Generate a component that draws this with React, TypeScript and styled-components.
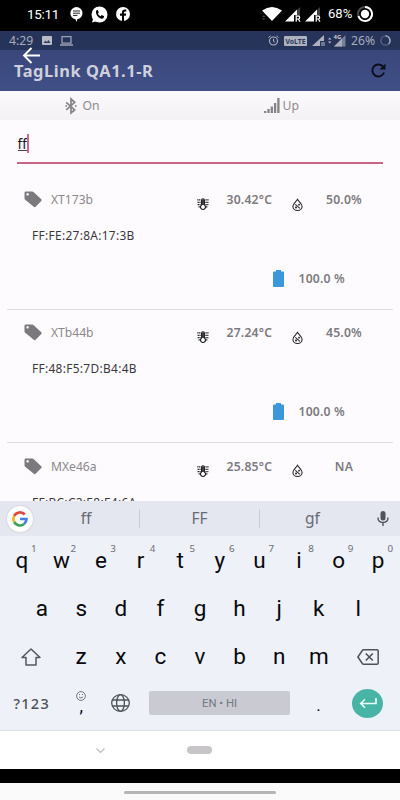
import React from 'react';
import styled, { createGlobalStyle } from 'styled-components';

const GlobalStyle = createGlobalStyle`
  * { box-sizing: border-box; }
  body { margin: 0; background: #000; overflow: hidden; }
`;

const Phone = styled.main`
  width: 400px;
  height: 800px;
  display: flex;
  flex-direction: column;
  overflow: hidden;
  background: #fefbff;
  font-family: 'Noto Sans', sans-serif;
  white-space: nowrap;
`;

const SystemBar = styled.div`
  flex: 0 0 31px;
  display: flex;
  align-items: center;
  background: #000;
  color: #fff;
  padding: 0 0 3px 27px;
  font: 13.5px/28px Roboto, sans-serif;
`;

const InnerBar = styled.div`
  flex: 0 0 19px;
  display: flex;
  align-items: center;
  background: linear-gradient(#27335a, #26345a);
  color: #a7acba;
  padding: 0 0 0 9px;
  font-size: 12.2px;
  line-height: 19px;
`;

const Label = styled.span<{ $w: number; $size?: number; $ml?: number; $tight?: boolean }>`
  flex: 0 0 ${p => p.$w}px;
  margin-left: ${p => p.$ml ?? 0}px;
  letter-spacing: ${p => (p.$tight ? '-0.3px' : 'normal')};
  ${p => p.$size ? `font-size: ${p.$size}px;` : ''}
`;

const Icon = styled.svg<{ $ml?: number; $mt?: number }>`
  display: block;
  flex: none;
  overflow: visible;
  margin-left: ${p => p.$ml ?? 0}px;
  margin-top: ${p => p.$mt ?? 0}px;
`;

const Header = styled.header`
  position: relative;
  flex: 0 0 41px;
  display: flex;
  align-items: center;
  justify-content: space-between;
  padding: 0 14px 0 14px;
  background: linear-gradient(#39477b, #404f86);
`;

const Title = styled.h1`
  margin: 0;
  color: #ced1dc;
  font-size: 16.4px;
  line-height: 24px;
  font-weight: 700;
  letter-spacing: 0.57px;
`;

const BackButton = styled.div`
  position: absolute;
  left: 22px;
  top: -3px;
`;

const Connection = styled.div`
  flex: 0 0 29px;
  display: flex;
  align-items: center;
  padding-left: 65px;
  background: linear-gradient(#faf9fb, #f5f2f5);
  color: #8d8b8e;
  font-size: 12.2px;
`;

const ConnectionItem = styled.div<{ $w: number; $gap: number }>`
  width: ${p => p.$w}px;
  display: flex;
  align-items: center;
  gap: ${p => p.$gap}px;
`;

const Search = styled.div`
  flex: 0 0 44px;
  margin: 0 17px;
  padding-top: 14px;
  border-bottom: 2px solid #cc6484;
  display: flex;
  color: #17151a;
  font-size: 13.6px;
  line-height: 20px;
`;

const Typed = styled.span`
  height: 17px;
  margin-left: 0.5px;
  border-bottom: 1px solid #444;
`;

const Caret = styled.i`
  width: 2px;
  height: 19px;
  background: #cf6588;
`;

const TagList = styled.section`
  flex: 0 0 337px;
  overflow: hidden;
  padding: 12.6px 7px 0;
`;

const TagRow = styled.article`
  height: 133.3px;
  border-bottom: 1px solid #e0dbe1;
  padding: 11px 0 0 17px;
`;

const TopLine = styled.div`
  display: grid;
  grid-template-columns: 27px 146px 29.5px 65px 26.5px 52px;
  align-items: center;
  height: 24px;
  color: #8a888c;
  font-size: 12.1px;
`;

const Reading = styled.span<{ $center?: boolean }>`
  color: #7c7a7e;
  font-size: 12.2px;
  font-weight: 600;
  letter-spacing: 0.2px;
  text-align: ${p => (p.$center ? 'center' : 'left')};
`;

const Address = styled.div`
  margin: 13.4px 0 0 8px;
  height: 20px;
  line-height: 20px;
  color: #39373b;
  font-size: 11.9px;
  letter-spacing: 0.32px;
`;

const BatteryLine = styled.div`
  margin: 22.3px 0 0 249px;
  height: 22px;
  display: flex;
  align-items: center;
  gap: 14.5px;
`;

const Keyboard = styled.section`
  flex: 0 0 230px;
  display: flex;
  flex-direction: column;
  background: #eef1f7;
  border-bottom: 1px solid #dedfe2;
  color: #08090c;
  font-family: Roboto, sans-serif;
`;

const Suggestions = styled.div`
  flex: 0 0 35px;
  display: grid;
  grid-template-columns: 33px 106px 121px 105px 35px;
  align-items: center;
  background: #e5e7f0;
  color: #686b72;
  font: 15.5px/35px 'Noto Sans', sans-serif;
  text-align: center;
`;

const Suggestion = styled.span<{ $framed?: boolean }>`
  height: 19px;
  line-height: 19px;
  border: solid #cdcfd7;
  border-width: ${p => (p.$framed ? '0 1px' : '0')};
`;

const GoogleBadge = styled.div`
  width: 26px;
  height: 26px;
  margin-left: 7px;
  border-radius: 50%;
  background: #fff;
  box-shadow: 0 0 2px #bbb;
  display: grid;
  place-items: center;
`;

const KeyRow = styled.div<{ $columns: string; $pad?: number; $lift?: number }>`
  flex: 0 0 48.2px;
  display: grid;
  grid-template-columns: ${p => p.$columns};
  padding: 0 ${p => p.$pad ?? 2}px ${p => p.$lift ?? 0}px;
`;

const Key = styled.div<{ $size?: number }>`
  position: relative;
  display: flex;
  flex-direction: column;
  align-items: center;
  justify-content: center;
  font-size: ${p => p.$size ?? 22.5}px;
  line-height: 22px;
`;

const Hint = styled.sup`
  position: absolute;
  left: 29px;
  top: 7px;
  color: #6b6e74;
  font: 9.8px/11px 'Noto Sans', sans-serif;
`;

const ModeKey = styled(Key)`
  color: #4c5057;
  font: 500 14.5px/20px 'Noto Sans', sans-serif;
  letter-spacing: 1.3px;
`;

const SpaceKey = styled.div`
  align-self: center;
  height: 24px;
  margin: 0 0 0 8.5px;
  border-radius: 2px;
  background: #cacad3;
  color: #6f7981;
  font-size: 11.3px;
  line-height: 25px;
  text-align: center;
`;

const CommaKey = styled(Key)`
  line-height: 10px;
  font-size: 18px;
  justify-content: flex-start;
  padding-top: 10px;
`;

const PeriodKey = styled(Key)`
  font-size: 17px;
  padding-top: 3px;
`;

const EnterKey = styled.div`
  align-self: center;
  margin-left: 5.5px;
  width: 31px;
  height: 29px;
  border-radius: 50%;
  background: #48b4a6;
  display: grid;
  place-items: center;
`;

const InnerNav = styled.nav`
  flex: 0 0 38px;
  display: flex;
  align-items: center;
  padding-left: 96px;
  background: #fff;
`;

const HomePill = styled.span`
  width: 25px;
  height: 8px;
  margin-left: 82px;
  border-radius: 4px;
  background: #c8c5c8;
`;

const BlackStrip = styled.div`
  flex: 0 0 14px;
  background: #000;
`;

const GestureBar = styled.div`
  flex: 0 0 17px;
  background: #fafafa;
  padding: 7.5px 0 0 124px;
`;

const GestureHandle = styled.span`
  display: block;
  width: 152px;
  height: 3px;
  border-radius: 2px;
  background: #b5b5b5;
`;

const Thermometer = () => (
  <Icon width="12" height="13" viewBox="0 0 12 13" $mt={10}>
    <path d="M4.6 7V2q0-1.300 1.400-1.300T7.400 2v5a2.500 2.500 0 1 1-2.800 0Z" fill="#fff" stroke="#171619" strokeWidth="1.100" />
    <path d="M6 1.500V7" stroke="#171619" strokeWidth="1.600" />
    <path d="M.2 1.800h3.400M.6 4.300h3M.6 6.600h3M1.500 8.800h1.500M8.400 1.800h3.400M8.400 4.300h3M8.400 6.600h3M9 8.800h1.500" stroke="#29282b" strokeWidth="1.300" strokeDasharray="1.400 .4" />
  </Icon>
);

const Droplet = () => (
  <Icon width="11" height="14" viewBox="0 0 12 14" $mt={10}>
    <path d="M6 .8C4.500 3.200 1 5.500 1 8.500a5 4.500 0 0 0 10 0C11 5.500 7.500 3.200 6 .8Z" fill="none" stroke="#252427" strokeWidth="1.200" />
    <path d="m3.600 6.200 5 4.500" stroke="#252427" strokeWidth="1.100" />
    <circle cx="7.700" cy="6.600" r="1" fill="#252427" />
    <circle cx="4.400" cy="9.700" r="1.100" fill="#252427" />
  </Icon>
);

const TagIcon = () => (
  <Icon width="18" height="17" viewBox="0 0 18 17">
    <path fillRule="evenodd" d="M1.800.5h6.400q.7 0 1.300.6l7.800 7.100q.8.8 0 1.700l-5.700 5.900q-.9.800-1.800 0L1.200 8.700Q.5 8 .5 7.200V1.900Q.5.500 1.800.500ZM3.600 2.100a1.250 1.250 0 1 0 .01 0Z" fill="#7b797d" />
  </Icon>
);

const SignalR = ({ ml }: { ml: number }) => (
  <Icon width="16" height="15" viewBox="0 0 16 15" $ml={ml}>
    <path d="M10 5 15 0v9H10Z" fill="#404040" />
    <path d="M0 14.500 12 2.500V8H9v6.500Z" fill="#fff" />
    <path d="M11.200 14.800V9.200h2.200q1.300 0 1.300 1.400T13.400 12h-2m1.800 0 1.800 2.800" stroke="#fff" strokeWidth="1.200" fill="none" />
  </Icon>
);

const tags = [
  { name: 'XT173b', address: 'FF:FE:27:8A:17:3B', temp: '30.42°C', humidity: '50.0%' },
  { name: 'XTb44b', address: 'FF:48:F5:7D:B4:4B', temp: '27.24°C', humidity: '45.0%' },
  { name: 'MXe46a', address: 'FF:BC:C2:E8:E4:6A', temp: '25.85°C', humidity: 'NA' },
];

export default function App() {
  return (
    <Phone>
      <GlobalStyle />
      <SystemBar>
        <Label $w={43} $tight>15:11</Label>
        <Icon width="13" height="15" viewBox="0 0 13 15">
          <path d="M6.500 0a6.300 6.200 0 0 1 .8 12.300L6.500 15l-1-2.700A6.300 6.200 0 0 1 6.500 0Z" fill="#fff" />
          <path d="M3 4h7M3 6.200h7M3 8.400h4.500" stroke="#222" strokeWidth="1" />
        </Icon>
        <Icon width="17" height="17" viewBox="0 0 17 17" $ml={8}>
          <circle cx="8.500" cy="8.500" r="8" fill="#fff" />
          <path d="m1 16.500 1.300-4.600L6 15Z" fill="#fff" />
          <path d="M5.400 4.300 6.800 4l1 2.500-1 1.200q1 1.600 2.700 2.500l1.200-1.100 2.400 1.200-.5 1.800c-3.300 2.500-9.200-3.400-7.200-7.800Z" fill="#000" />
        </Icon>
        <Icon width="14" height="14" viewBox="0 0 14 14" $ml={8}>
          <circle cx="7" cy="7" r="7" fill="#fff" />
          <path d="M6 14V8.800H4V6.600h2V5.200q0-2.800 2.800-2.800h1.500v2H9q-1 0-1 1v1.200h2.200l-.4 2.200H8V14Z" fill="#000" />
        </Icon>
        <Icon width="20" height="14" viewBox="0 0 20 14" $ml={132}>
          <path d="M0 3.500q10-7 20 0L10 14Z" fill="#fff" />
          <path d="m0 10 1.800-1.800L3.600 10Zm0 1.200L1.800 13l1.800-1.800Z" fill="#444" />
        </Icon>
        <SignalR ml={3} />
        <SignalR ml={4} />
        <Label $w={25} $size={13.100} $ml={7}>68%</Label>
        <Icon width="16" height="16" viewBox="0 0 16 16" $ml={4}>
          <circle cx="8" cy="8" r="7" fill="none" stroke="#4b4b4b" strokeWidth="2" />
          <path d="M8 1a7 7 0 1 1-6.600 9" fill="none" stroke="#fff" strokeWidth="2" />
          <circle cx="8" cy="8" r="4.200" fill="#fff" />
        </Icon>
      </SystemBar>

      <InnerBar>
        <Label $w={33}>4:29</Label>
        <Icon width="10" height="9" viewBox="0 0 10 9">
          <rect width="10" height="9" rx="1" fill="#b8bcc6" />
          <path d="m1.500 7 2-2.500L5 6l1.500-2L8.500 7Z" fill="#35405f" />
        </Icon>
        <Icon width="13" height="10" viewBox="0 0 13 10" $ml={8}>
          <path d="M2 .7h9v6.500H2ZM0 9h13" fill="none" stroke="#9aa1b3" strokeWidth="1.300" />
        </Icon>
        <Icon width="11" height="11" viewBox="0 0 11 11" $ml={194.500}>
          <circle cx="5.500" cy="6" r="4" fill="none" stroke="#b1b6c3" strokeWidth="1.100" />
          <path d="M5.500 3.800v2.500L7 7.200M.5 2.500 2.500.8M8.500.8l2 1.700" fill="none" stroke="#b1b6c3" />
        </Icon>
        <Icon width="23" height="10" viewBox="0 0 23 10" $ml={5.500}>
          <rect width="23" height="10" rx="1" fill="#aeb2bd" />
          <text x="1.500" y="7.800" fontSize="7.500" fontWeight="700" textLength="20" lengthAdjust="spacingAndGlyphs" fill="#2a365b">VoLTE</text>
        </Icon>
        <Icon width="13" height="11" viewBox="0 0 13 11" $ml={5}>
          <path d="M0 11 12 0v6H8v5Z" fill="#adb1bc" />
          <path d="M9 7h4v4H9Z" fill="#6d768c" />
        </Icon>
        <Icon width="18" height="13" viewBox="0 0 18 13" $ml={3}>
          <path d="M0 5.500 1.700 3.500 3.400 5.500Zm0 2L1.700 9.500 3.400 7.500Z" fill="#b5b9c4" />
          <path d="M6 12.500 17.500 1v11.500Z" fill="#74809a" />
          <path d="m6 12.500 8-8v8Z" fill="#a5abb9" />
          <text x="5.500" y="5" fontSize="6" fontWeight="700" fill="#c6cad3">4G</text>
        </Icon>
        <Label $w={24} $ml={5}>26%</Label>
        <Icon width="11" height="11" viewBox="0 0 11 11" $ml={5}>
          <circle cx="5.500" cy="5.500" r="4.600" fill="none" stroke="#56617f" strokeWidth="1.400" />
          <path d="M5.500.9a4.600 4.600 0 0 1 3 8" fill="none" stroke="#9da4b6" strokeWidth="1.400" />
        </Icon>
      </InnerBar>

      <Header>
        <BackButton>
          <Icon width="18" height="17" viewBox="0 0 18 17">
            <path d="M18 8.500H2M9.500 1 2 8.500 9.500 16" fill="none" stroke="#fff" strokeWidth="1.900" />
          </Icon>
        </BackButton>
        <Title>TagLink QA1.1-R</Title>
        <Icon width="15" height="15" viewBox="0 0 15 15">
          <path d="M12.200 4A6 6 0 1 0 13 9.500" fill="none" stroke="#0c0e18" strokeWidth="1.900" />
          <path d="M14.500.5v6H8.500Z" fill="#0c0e18" />
        </Icon>
      </Header>

      <Connection>
        <ConnectionItem $w={199} $gap={5.500}>
          <Icon width="12" height="16" viewBox="0 0 12 16">
            <path d="m1.200 4.300 8.500 7.600L6 15V1l3.700 3.300-8.500 7.600" fill="none" stroke="#858387" strokeWidth="1.700" />
            <path d="M10.800 7.100v1.800M1.200 7.100v1.800" stroke="#858387" strokeWidth="1.300" />
          </Icon>
          <span>On</span>
        </ConnectionItem>
        <ConnectionItem $w={40} $gap={2.500}>
          <Icon width="16" height="15" viewBox="0 0 16 15" $mt={-1}>
            <path d="M1.200 15v-2M4.500 15v-4M7.800 15V8.500M11.100 15V5M14.400 15V0" stroke="#858387" strokeWidth="2.300" />
          </Icon>
          <span>Up</span>
        </ConnectionItem>
      </Connection>

      <Search><Typed>ff</Typed><Caret /></Search>

      <TagList>
        {tags.map(tag => (
          <TagRow key={tag.name}>
            <TopLine>
              <TagIcon />
              <span>{tag.name}</span>
              <Thermometer />
              <Reading>{tag.temp}</Reading>
              <Droplet />
              <Reading $center>{tag.humidity}</Reading>
            </TopLine>
            <Address>{tag.address}</Address>
            <BatteryLine>
              <Icon width="11" height="17" viewBox="0 0 11 17">
                <path d="M3 1.500V0h5v1.500h2q1 0 1 1V16q0 1-1 1H1q-1 0-1-1V2.500q0-1 1-1Z" fill="#3b98da" />
              </Icon>
              <Reading>100.0 %</Reading>
            </BatteryLine>
          </TagRow>
        ))}
      </TagList>

      <Keyboard>
        <Suggestions>
          <GoogleBadge>
            <Icon width="16" height="16" viewBox="0 0 16 16">
              <g fill="none" strokeWidth="2.700">
                <path d="M12.800 3.500A6.500 6.500 0 0 0 2.200 5" stroke="#df493d" />
                <path d="M2.200 5a6.500 6.500 0 0 0 0 6" stroke="#edb72a" />
                <path d="M2.200 11a6.500 6.500 0 0 0 9.900 2" stroke="#38a45a" />
                <path d="M12.100 13a6.500 6.500 0 0 0 2.400-5H8" stroke="#4581dd" />
              </g>
            </Icon>
          </GoogleBadge>
          <Suggestion>ff</Suggestion>
          <Suggestion $framed>FF</Suggestion>
          <Suggestion>gf</Suggestion>
          <Icon width="12" height="15" viewBox="0 0 12 15" $ml={12}>
            <rect x="3.500" width="5" height="9.500" rx="2.500" fill="#505359" />
            <path d="M1 6.500q0 5 5 5t5-5M6 11.500V15" fill="none" stroke="#505359" strokeWidth="1.400" />
          </Icon>
        </Suggestions>

        <KeyRow $columns="repeat(10, 1fr)">
          {[...'qwertyuiop'].map((letter, i) => (
            <Key key={letter}>{letter}<Hint>{(i + 1) % 10}</Hint></Key>
          ))}
        </KeyRow>
        <KeyRow $columns="repeat(9, 1fr)" $pad={22}>
          {[...'asdfghjkl'].map(letter => <Key key={letter}>{letter}</Key>)}
        </KeyRow>
        <KeyRow $columns="59.400px repeat(7, 1fr) 59.400px">
          <Key>
            <Icon width="20" height="18" viewBox="0 0 20 18" $ml={-1} $mt={1}>
              <path d="M10 1 1 9.500h4V17h10V9.500h4Z" fill="none" stroke="#53575f" strokeWidth="1.500" strokeLinejoin="round" />
            </Icon>
          </Key>
          {[...'zxcvbnm'].map(letter => <Key key={letter}>{letter}</Key>)}
          <Key>
            <Icon width="22" height="16" viewBox="0 0 22 16" $mt={2}>
              <path d="M6.500.8H20q1.200 0 1.200 1.200v12q0 1.200-1.200 1.200H6.500Q5.800 15.200 5.300 14.500L.9 8l4.400-6.500Q5.800.8 6.500.800Z" fill="none" stroke="#4d5159" strokeWidth="1.500" />
              <path d="m8.800 4.500 7 7m0-7-7 7" stroke="#4d5159" strokeWidth="1.600" />
            </Icon>
          </Key>
        </KeyRow>
        <KeyRow $columns="59.400px 39.600px 39.600px 149.400px 57px 1fr" $lift={3}>
          <ModeKey>?123</ModeKey>
          <CommaKey>
            <Icon width="10" height="10" viewBox="0 0 10 10">
              <circle cx="5" cy="5" r="4.400" fill="none" stroke="#666a70" strokeWidth=".9" />
              <path d="M3 3.500h1M6 3.500h1M3 6q2 2 4 0" fill="none" stroke="#666a70" strokeWidth=".9" />
            </Icon>
            <span>,</span>
          </CommaKey>
          <Key>
            <Icon width="19" height="18" viewBox="0 0 19 18">
              <g fill="none" stroke="#4d5159" strokeWidth="1.300">
                <ellipse cx="9.500" cy="9" rx="8.800" ry="8.300" />
                <ellipse cx="9.500" cy="9" rx="3.900" ry="8.300" />
                <path d="M1.300 6h16.400M1.300 12h16.400" />
              </g>
            </Icon>
          </Key>
          <SpaceKey>EN • HI</SpaceKey>
          <PeriodKey>.</PeriodKey>
          <EnterKey>
            <Icon width="18" height="10" viewBox="0 0 18 10">
              <path d="M17 0v5.500H2M6 1.200 1.700 5.500 6 9.800" fill="none" stroke="#e9fffb" strokeWidth="1.600" />
            </Icon>
          </EnterKey>
        </KeyRow>
      </Keyboard>

      <InnerNav>
        <Icon width="9" height="5" viewBox="0 0 9 5">
          <path d="m.5.5 4 4 4-4" fill="none" stroke="#bdbdbd" strokeWidth="1.200" />
        </Icon>
        <HomePill />
      </InnerNav>
      <BlackStrip />
      <GestureBar><GestureHandle /></GestureBar>
    </Phone>
  );
}
